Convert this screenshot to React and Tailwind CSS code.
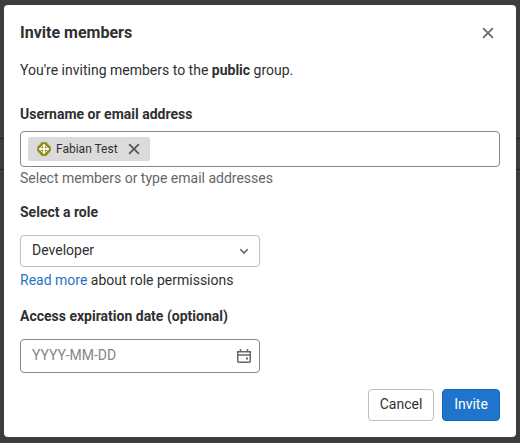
function CloseIcon({ className }) {
  return (
    <svg viewBox="0 0 16 16" className={className} fill="none" stroke="currentColor" strokeWidth="1.7" strokeLinecap="round">
      <path d="M3.600 3.600l8.800 8.800M12.400 3.600l-8.800 8.800" />
    </svg>
  );
}

function Avatar() {
  return (
    <svg viewBox="0 0 16 16" className="size-4">
      <circle cx="8" cy="8" r="7.500" fill="#d0d0d0" />
      <path d="M5.500 1.200h5l1.300 2.100 2 1.700 1 1.500v3l-1 1.500-2 1.700-1.300 2.100h-5l-1.300-2.100-2-1.700-1-1.500v-3l1-1.500 2-1.700z" fill="#8e8b10" />
      <path d="M8 3.200L12.800 8 8 12.800 3.200 8z" fill="#fff" stroke="#fff" strokeWidth="1" strokeLinejoin="round" />
      <path d="M6.500 4.500v7M9.500 4.500v7M4.500 6.500h7M4.500 9.500h7" stroke="#8e8b10" strokeWidth=".8" />
      <path d="M8 4v8M4 8h8" stroke="#fff" strokeWidth="1.600" />
    </svg>
  );
}

export default function App() {
  return (
    <div className="relative h-[443px] w-[520px] bg-[#3c3c3c] px-1 pt-[5px] font-['Roboto',sans-serif] text-[14px] leading-5 text-[#303030]">
      <div className="absolute left-0 top-[138px] h-px w-full bg-[#222]" />
      <div className="absolute left-0 top-[169px] h-px w-full bg-[#222]" />
      <section className="relative flex h-[432px] flex-col rounded-[4px] bg-white px-4">
        <header className="mt-[18px] flex h-5 items-center justify-between">
          <h2 className="text-[16px] font-bold">Invite members</h2>
          <CloseIcon className="mr-1 size-4 text-[#666]" />
        </header>
        <p className="mt-[17px]">
          You're inviting members to the <strong className="font-bold">public</strong> group.
        </p>

        <label className="mt-6 font-bold">Username or email address</label>
        <div className="mt-[7px] flex h-9 shrink-0 items-center rounded-[4px] border border-[#868686] px-[7px]">
          <span className="flex h-6 w-[122px] items-center rounded-[2px] bg-[#dbdbdb] pl-2 text-[12px]">
            <Avatar />
            <span className="ml-1">Fabian Test</span>
            <CloseIcon className="ml-2 size-4 text-[#555]" />
          </span>
        </div>
        <p className="mt-px text-[#666]">Select members or type email addresses</p>

        <label className="mt-[14px] font-bold">Select a role</label>
        <div className="mt-[13px] flex h-8 w-60 shrink-0 items-center justify-between rounded-[4px] border border-[#bfbfbf] pl-[11px] pr-[7px]">
          <span className="pb-0.5">Developer</span>
          <svg viewBox="0 0 16 16" className="size-4 text-[#666]" fill="none" stroke="currentColor" strokeWidth="1.7" strokeLinecap="round">
            <path d="M4.750 6.750L8 10l3.250-3.250" />
          </svg>
        </div>
        <p className="mt-[3px]"><a className="text-[#1f75cb]">Read more</a> about role permissions</p>

        <label className="mt-4 font-bold">Access expiration date (optional)</label>
        <div className="mt-[13px] flex h-[34px] w-60 shrink-0 items-center justify-between rounded-[4px] border border-[#868686] pl-[11px] pr-[7px]">
          <span className="pb-0.5 text-[#868686]">YYYY-MM-DD</span>
          <svg viewBox="0 0 16 16" className="size-4 text-[#666]" fill="none" stroke="currentColor" strokeWidth="1.5">
            <path d="M4.500 1v3M11.500 1v3M1.750 3.750h12.500v9.500a1 1 0 0 1-1 1H2.750a1 1 0 0 1-1-1zM1.500 7h13" />
            <path d="M10 9.500h2v2h-2z" fill="currentColor" stroke="none" />
          </svg>
        </div>

        <footer className="mt-4 flex justify-end gap-2">
          <button className="h-8 w-[66px] rounded-[4px] border border-[#bfbfbf] pb-0.5">Cancel</button>
          <button className="h-8 w-[58px] rounded-[4px] border border-[#1068bf] bg-[#1f75cb] pb-0.5 text-white">Invite</button>
        </footer>
      </section>
    </div>
  );
}
